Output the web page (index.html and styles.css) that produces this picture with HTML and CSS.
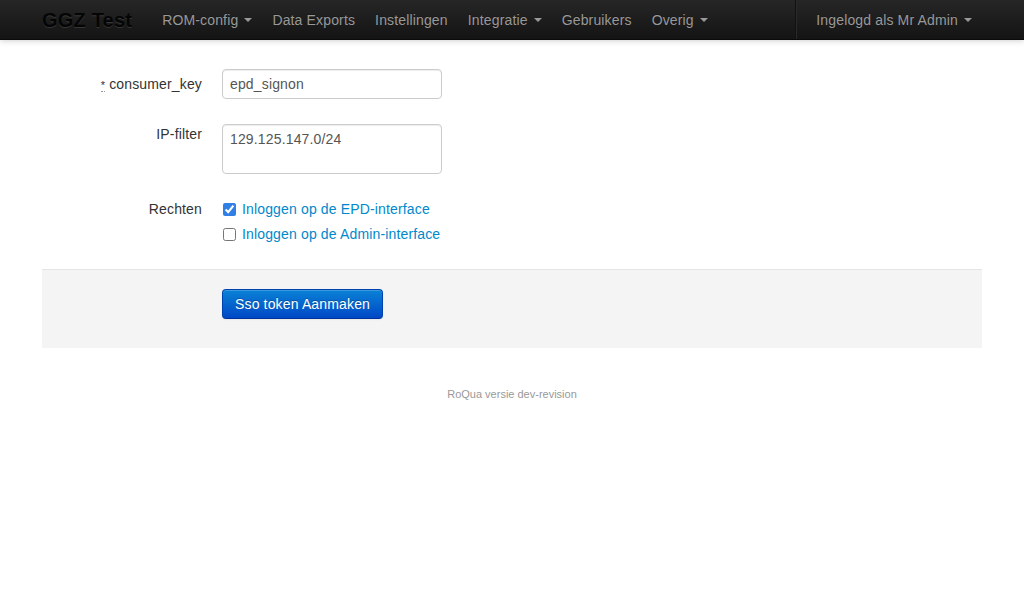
FILE: index.html
```html
<!DOCTYPE html>
<html>
<head>
<meta charset="utf-8">
<link rel="stylesheet" href="styles.css">
</head>
<body>
<div class="navbar">
  <div class="container nav-inner">
    <a class="brand">GGZ Test</a>
    <ul class="nav">
      <li><a>ROM-config <b class="caret"></b></a></li>
      <li><a>Data Exports</a></li>
      <li><a>Instellingen</a></li>
      <li><a>Integratie <b class="caret"></b></a></li>
      <li><a>Gebruikers</a></li>
      <li><a>Overig <b class="caret"></b></a></li>
    </ul>
    <ul class="nav nav-right">
      <li class="divider-vertical"></li>
      <li><a>Ingelogd als Mr Admin <b class="caret"></b></a></li>
    </ul>
  </div>
</div>

<div class="container main">
  <form class="form-horizontal">
    <div class="control-group">
      <label class="control-label"><abbr title="required">*</abbr> consumer_key</label>
      <div class="controls"><input class="text-input" type="text" value="epd_signon"></div>
    </div>
    <div class="control-group">
      <label class="control-label label-top">IP-filter</label>
      <div class="controls"><textarea class="text-area">129.125.147.0/24</textarea></div>
    </div>
    <div class="control-group">
      <label class="control-label label-top">Rechten</label>
      <div class="controls checks">
        <label class="checkbox"><input type="checkbox" checked> Inloggen op de EPD-interface</label>
        <label class="checkbox"><input type="checkbox"> Inloggen op de Admin-interface</label>
      </div>
    </div>
    <div class="form-actions">
      <button type="button" class="btn-primary">Sso token Aanmaken</button>
    </div>
  </form>
  <footer class="footer">RoQua versie dev-revision</footer>
</div>
</body>
</html>
```

FILE: styles.css
```css
* { box-sizing: border-box; }
body {
  margin: 0;
  font-family: "Liberation Sans", Arial, sans-serif;
  font-size: 14px;
  line-height: 20px;
  letter-spacing: 0.15px;
  color: #333;
  background: #fff;
}
.container {
  width: 940px;
  margin: 0 auto;
}
.navbar {
  height: 40px;
  background: linear-gradient(to bottom, #262626, #141414);
  border-bottom: 1px solid #0a0a0a;
  box-shadow: 0 1px 6px rgba(0, 0, 0, 0.18);
}
.nav-inner {
  display: flex;
  align-items: stretch;
  height: 39px;
}
.brand {
  font-size: 20px;
  font-weight: bold;
  color: #050505;
  text-shadow: 0 1px 0 rgba(255, 255, 255, 0.12);
  padding: 0 20px 0 0;
  line-height: 40px;
  letter-spacing: 0.2px;
}
.nav {
  display: flex;
  list-style: none;
  margin: 0;
  padding: 0;
}
.nav li { display: flex; }
.nav a {
  color: #999;
  padding: 0 10px;
  line-height: 40px;
  font-size: 14px;
  text-shadow: 0 -1px 0 rgba(0, 0, 0, 0.25);
}
.nav-right { margin-left: auto; }
.divider-vertical {
  width: 2px;
  border-left: 1px solid #111;
  border-right: 1px solid #2a2a2a;
  margin-right: 9px;
}
.caret {
  display: inline-block;
  width: 0;
  height: 0;
  border-top: 4px solid #999;
  border-left: 4px solid transparent;
  border-right: 4px solid transparent;
  vertical-align: middle;
  margin-left: 2px;
  position: relative;
  top: -1px;
}
.main { padding-top: 29px; }
.control-group {
  display: flex;
  margin-bottom: 25px;
}
.control-label {
  width: 160px;
  text-align: right;
  padding-top: 5px;
  margin-right: 20px;
}
.control-label.label-top { padding-top: 0; }
.control-label abbr {
  text-decoration: none;
  border-bottom: 1px dotted #999;
  font-size: 11px;
  line-height: 11px;
  cursor: help;
}
.text-input, .text-area {
  width: 220px;
  padding: 4px 7px;
  font-family: "Liberation Sans", Arial, sans-serif;
  font-size: 14px;
  line-height: 20px;
  letter-spacing: 0.15px;
  color: #555;
  border: 1px solid #ccc;
  border-radius: 4px;
  box-shadow: inset 0 1px 1px rgba(0, 0, 0, 0.075);
  margin: 0;
}
.text-input { height: 30px; }
.text-area {
  height: 50px;
  resize: none;
  display: block;
}
.checks {
  display: flex;
  flex-direction: column;
  gap: 5px;
}
.checkbox {
  display: flex;
  align-items: center;
  color: #0088cc;
  line-height: 20px;
  height: 20px;
}
.checkbox input {
  margin: 1px 6px 0 1px;
  width: 13px;
  height: 13px;
  accent-color: #2f7fe6;
}
.form-actions {
  background: #f4f4f4;
  border-top: 1px solid #e5e5e5;
  padding: 19px 20px 29px 180px;
  margin-bottom: 37px;
}
.btn-primary {
  font-family: "Liberation Sans", Arial, sans-serif;
  font-size: 14px;
  line-height: 20px;
  letter-spacing: 0.15px;
  height: 30px;
  padding: 4px 12px;
  color: #fff;
  text-shadow: 0 -1px 0 rgba(0, 0, 0, 0.25);
  background: linear-gradient(to bottom, #0a82d6, #0048c6);
  border: 1px solid #0041b0;
  border-bottom-color: #003399;
  border-radius: 4px;
  box-shadow: inset 0 1px 0 rgba(255, 255, 255, 0.2), 0 1px 2px rgba(0, 0, 0, 0.05);
}
.footer {
  text-align: center;
  font-size: 11px;
  line-height: 18px;
  letter-spacing: 0;
  color: #999;
}
```
